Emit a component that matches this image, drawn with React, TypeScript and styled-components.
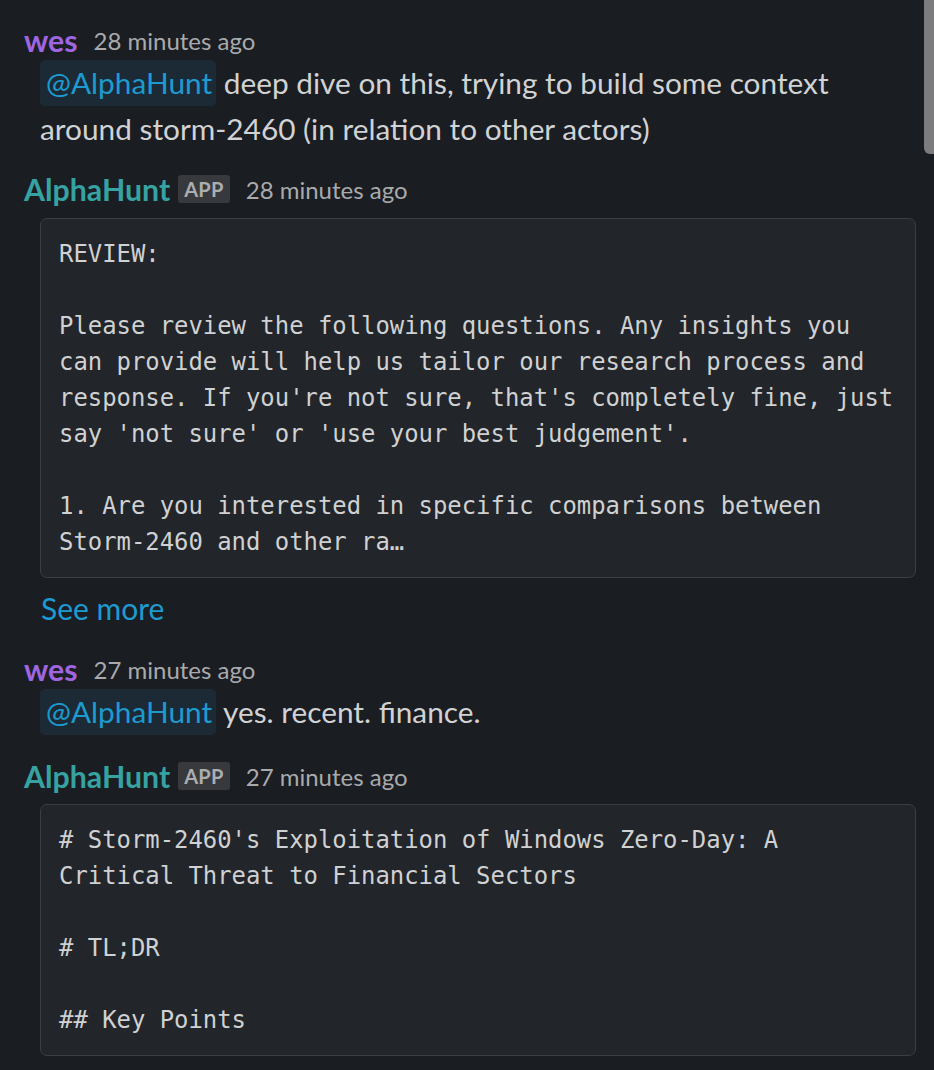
import React from "react";
import styled, { createGlobalStyle } from "styled-components";

const Global = createGlobalStyle`
  html, body { margin: 0; padding: 0; background: #1a1d21; }
  body { font-family: Lato, "Noto Sans", sans-serif; -webkit-font-smoothing: antialiased; }
`;

const Page = styled.div`
  position: relative;
  min-height: 1070px;
  overflow: hidden;
  padding: 20px 18px 0 24px;
  box-sizing: border-box;
  background: #1a1d21;
`;

const ScrollThumb = styled.div`
  position: absolute;
  top: 0;
  right: 0;
  width: 10px;
  height: 154px;
  background: #7c7c7e;
  border-bottom-left-radius: 6px;
`;

const Message = styled.div<{ $gap?: number }>`
  margin-top: ${(p) => p.$gap ?? 0}px;
  display: flex;
  flex-direction: column;
`;

const Header = styled.div`
  display: flex;
  align-items: center;
  height: 40px;
`;

const Name = styled.span<{ $color: string }>`
  font-family: Lato, sans-serif;
  font-weight: 700;
  font-size: 30.3px;
  color: ${(p) => p.$color};
`;

const Badge = styled.span`
  margin-left: 8px;
  height: 28px;
  line-height: 28px;
  padding: 0 6px;
  border-radius: 3px;
  background: #37393d;
  color: #acadaf;
  font-weight: 700;
  font-size: 20px;
  letter-spacing: 0.3px;
`;

const Time = styled.span`
  margin-left: 16px;
  font-size: 24px;
  color: #a9aaac;
`;

const Body = styled.div`
  margin-left: 16px;
  font-size: 29.8px;
  line-height: 46px;
  color: #d1d2d3;
`;

const Mention = styled.span`
  display: inline-block;
  line-height: 46px;
  padding: 0 4px 0 6px;
  border-radius: 5px;
  background: #1c2a35;
  color: #1d9bd1;
`;

const CodeBlock = styled.pre<{ $top: number }>`
  margin: ${(p) => p.$top}px 0 0 16px;
  padding: 17px 12px 17px 18px;
  border: 1px solid #3c3e42;
  border-radius: 7px;
  background: #222529;
  color: #d0d1d2;
  font-family: "DejaVu Sans Mono", "Liberation Mono", monospace;
  font-size: 23.9px;
  line-height: 36px;
  white-space: pre;
  overflow: hidden;
`;

const SeeMore = styled.div`
  margin: 10px 0 2px 17px;
  font-size: 30px;
  line-height: 40px;
  color: #1d9bd1;
`;

const WES = "#a066e2";
const BOT = "#36a2a2";

const review = `REVIEW:

Please review the following questions. Any insights you
can provide will help us tailor our research process and
response. If you're not sure, that's completely fine, just
say 'not sure' or 'use your best judgement'.

1. Are you interested in specific comparisons between
Storm-2460 and other ra\u2026`;

const report = `# Storm-2460's Exploitation of Windows Zero-Day: A
Critical Threat to Financial Sectors

# TL;DR

## Key Points`;

export default function App() {
  return (
    <>
      <Global />
      <Page>
        <ScrollThumb />
        <Message>
          <Header>
            <Name $color={WES}>wes</Name>
            <Time>28 minutes ago</Time>
          </Header>
          <Body>
            <Mention>@AlphaHunt</Mention> deep dive on this, trying to build some context
            <br />
            around storm-2460 (in relation to other actors)
          </Body>
        </Message>
        <Message $gap={17}>
          <Header>
            <Name $color={BOT}>AlphaHunt</Name>
            <Badge>APP</Badge>
            <Time>28 minutes ago</Time>
          </Header>
          <CodeBlock $top={9}>{review}</CodeBlock>
          <SeeMore>See more</SeeMore>
        </Message>
        <Message $gap={19}>
          <Header>
            <Name $color={WES}>wes</Name>
            <Time>27 minutes ago</Time>
          </Header>
          <Body>
            <Mention>@AlphaHunt</Mention> yes. recent. finance.
          </Body>
        </Message>
        <Message $gap={21}>
          <Header>
            <Name $color={BOT}>AlphaHunt</Name>
            <Badge>APP</Badge>
            <Time>27 minutes ago</Time>
          </Header>
          <CodeBlock $top={8}>{report}</CodeBlock>
        </Message>
      </Page>
    </>
  );
}
